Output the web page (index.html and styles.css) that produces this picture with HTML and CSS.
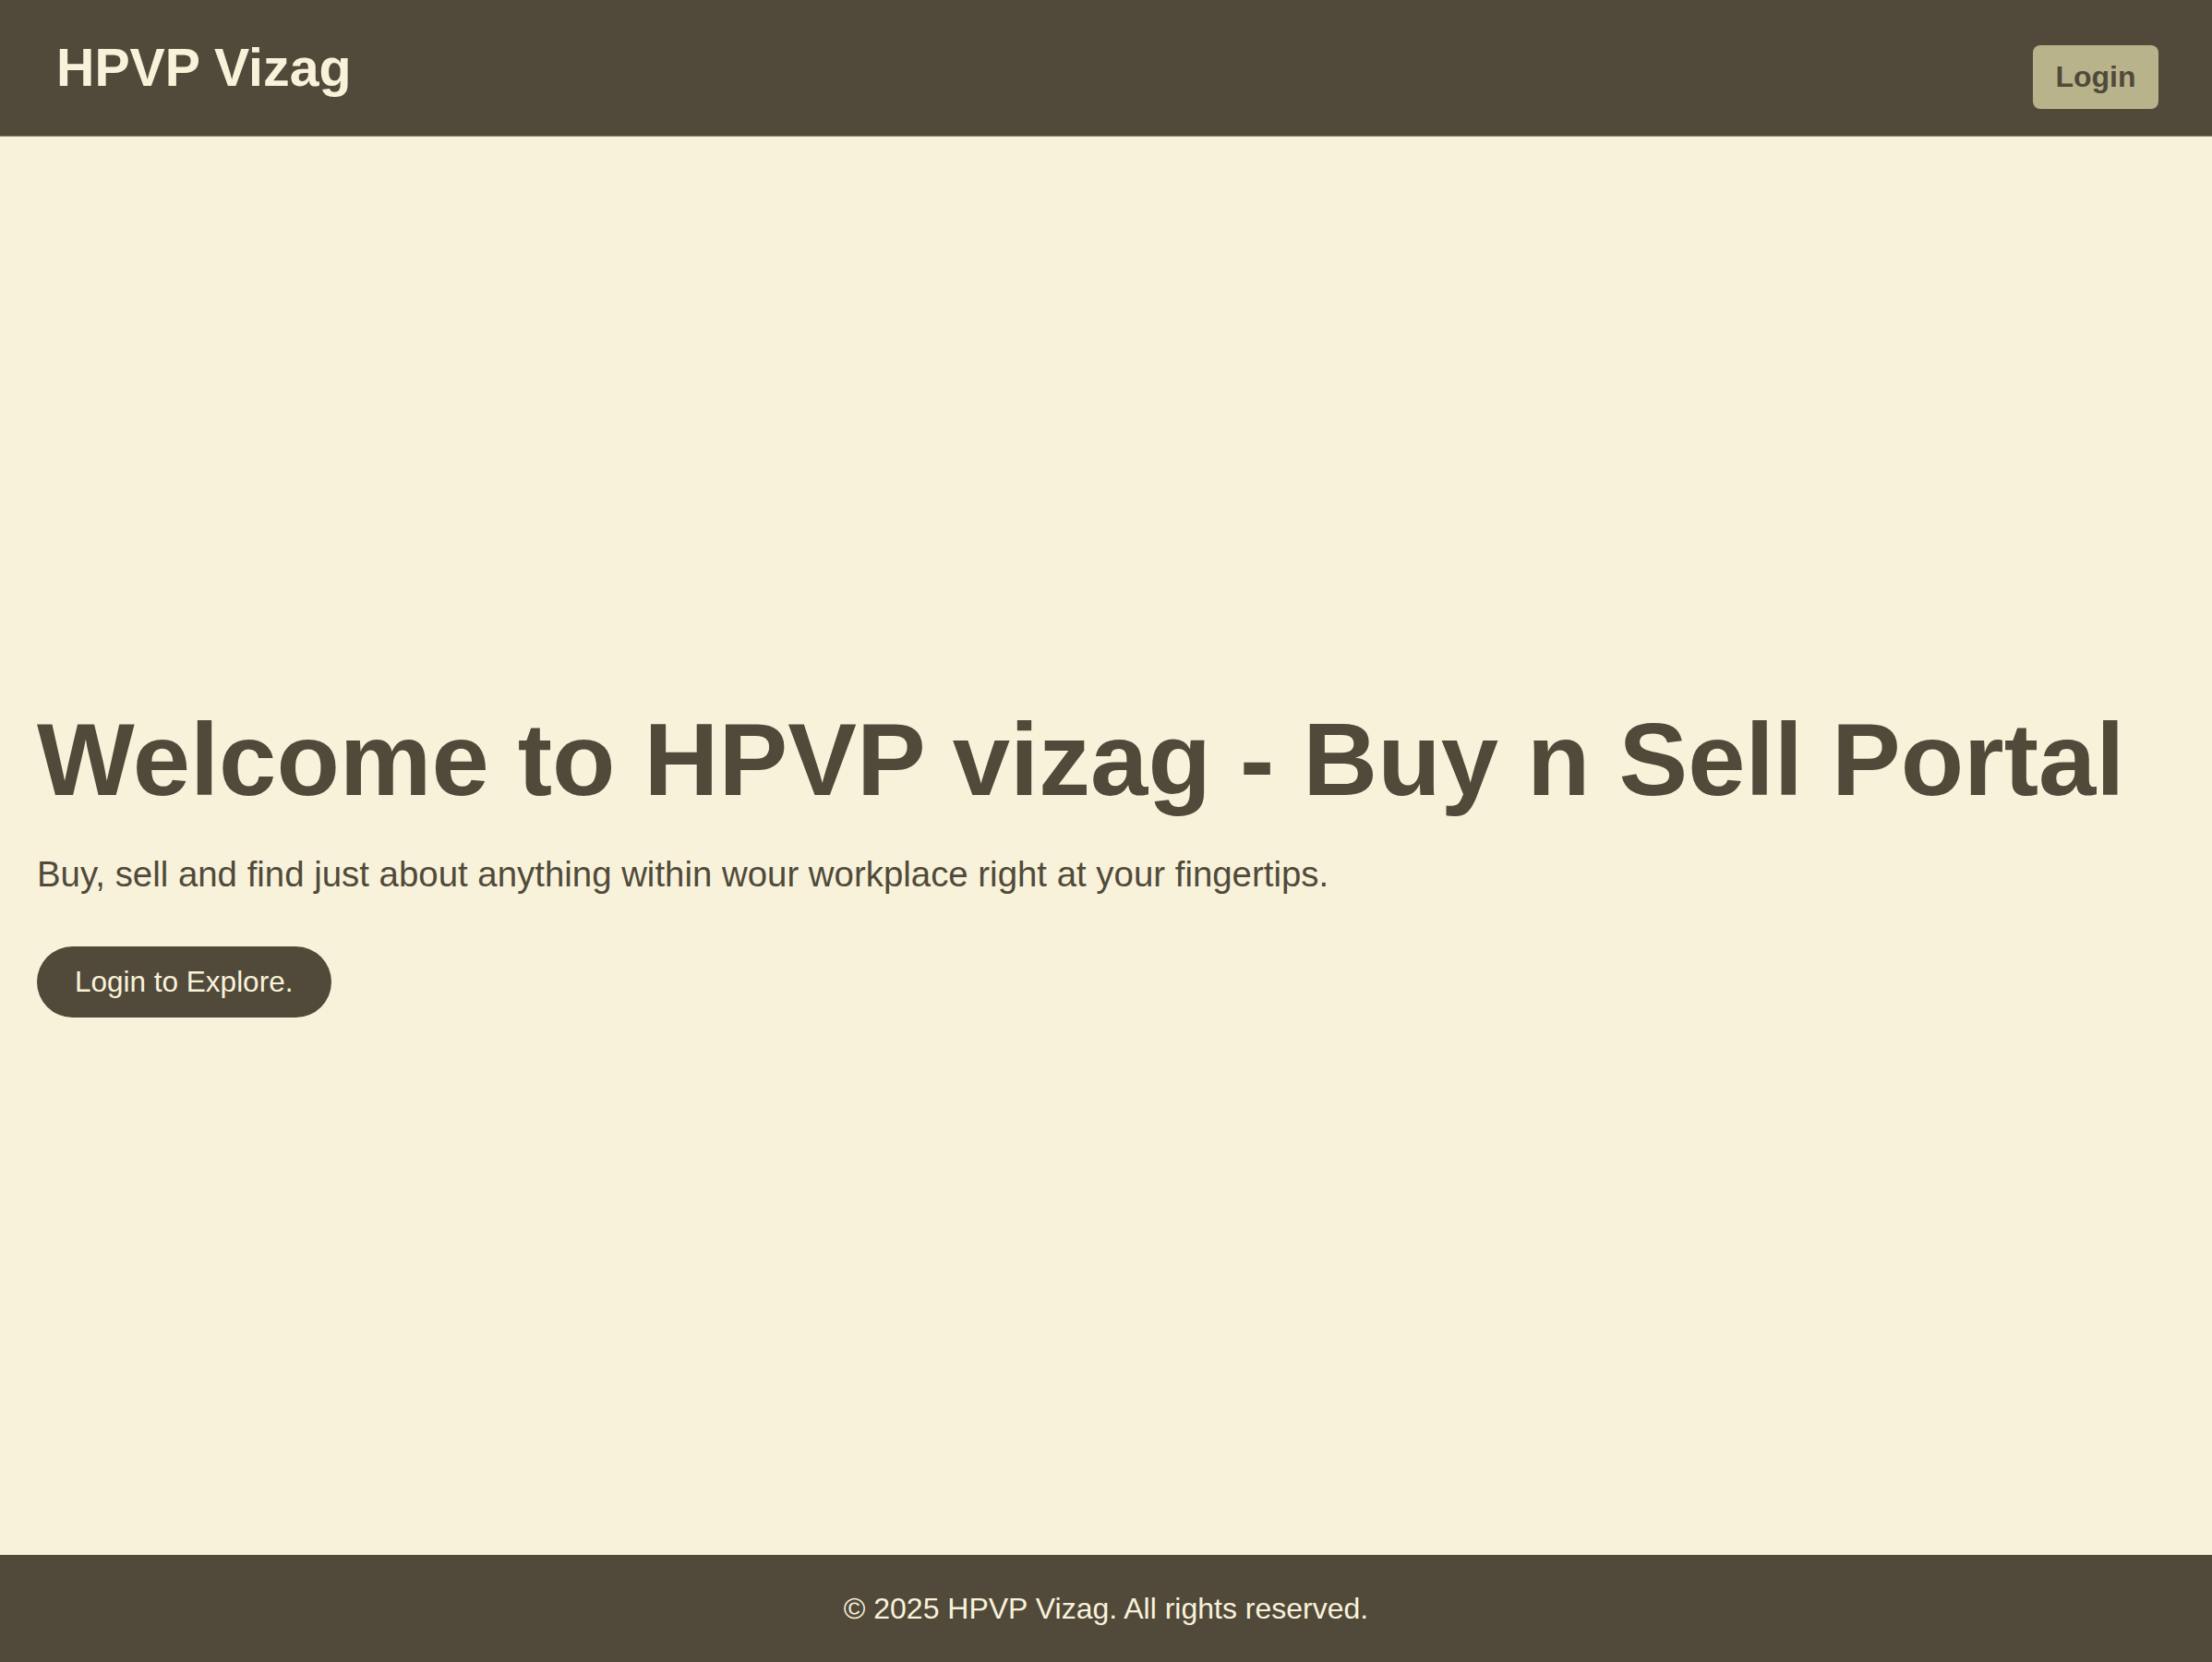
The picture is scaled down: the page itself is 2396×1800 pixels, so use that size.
FILE: index.html
```html
<!DOCTYPE html>
<html lang="en">
<head>
<meta charset="utf-8">
<title>HPVP Vizag</title>
<link rel="stylesheet" href="styles.css">
</head>
<body>
<div class="page">
  <header class="topbar">
    <div class="brand">HPVP Vizag</div>
    <button class="login-btn">Login</button>
  </header>
  <main class="hero">
    <h1 class="hero-title">Welcome to HPVP vizag - Buy n Sell Portal</h1>
    <p class="hero-sub">Buy, sell and find just about anything within wour workplace right at your fingertips.</p>
    <div class="hero-actions">
      <button class="explore-btn">Login to Explore.</button>
    </div>
  </main>
  <footer class="footer">© 2025 HPVP Vizag. All rights reserved.</footer>
</div>
</body>
</html>
```
FILE: styles.css
```css
* { box-sizing: border-box; }
html, body {
  margin: 0;
  padding: 0;
  height: 100%;
}
body {
  background: #f9f2da;
  color: #504a3a;
  font-family: "Liberation Sans", Arial, sans-serif;
}
.page {
  min-height: 100vh;
  display: flex;
  flex-direction: column;
}
.topbar {
  height: 148px;
  background: #514a3a;
  display: flex;
  justify-content: space-between;
  align-items: flex-start;
  padding: 0 58px 0 61px;
  border-bottom: 1px solid #8b8574;
}
.brand {
  color: #f9f2da;
  font-weight: 700;
  font-size: 57.3px;
  line-height: 1;
  margin-top: 45px;
}
.login-btn {
  margin-top: 49px;
  width: 136px;
  height: 69px;
  background: #b9b38c;
  color: #504a3a;
  border: none;
  border-radius: 8px;
  font-family: "Liberation Sans", Arial, sans-serif;
  font-weight: 700;
  font-size: 32px;
  padding: 0;
}
.hero {
  flex: 1;
  display: flex;
  flex-direction: column;
  justify-content: center;
  padding: 29px 40px 0;
}
.hero-title {
  margin: 0;
  font-size: 112px;
  font-weight: 700;
  line-height: 1.15;
  color: #504a3a;
}
.hero-sub {
  margin: 38px 0 0;
  font-size: 38.4px;
  color: #504a3a;
}
.hero-actions {
  margin-top: 56px;
}
.explore-btn {
  background: #514a3a;
  color: #f9f2da;
  border: none;
  border-radius: 40px;
  height: 77px;
  padding: 0 42px 0 41px;
  font-family: "Liberation Sans", Arial, sans-serif;
  font-size: 31.5px;
}
.footer {
  height: 116px;
  background: #514a3a;
  color: #f9f2da;
  font-size: 32px;
  display: flex;
  align-items: center;
  justify-content: center;
}
```
